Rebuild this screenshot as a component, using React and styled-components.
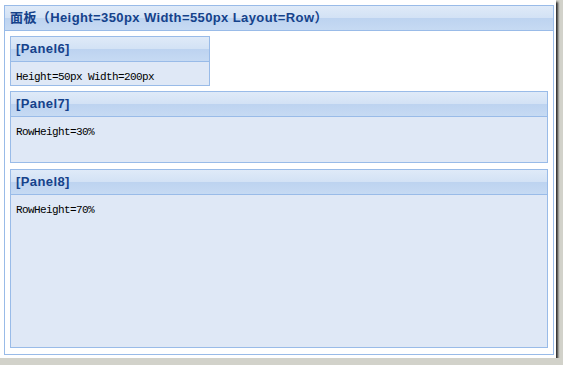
import styled, { createGlobalStyle } from "styled-components";

const GlobalStyle = createGlobalStyle`
    html, body {
        margin: 0;
        padding: 0;
        background: #d2d2ca;
    }
`;

const Frame = styled.div`
    width: 556px;
    height: 358px;
    box-sizing: border-box;
    padding: 5px 0 0 4px;
    background: #fff;
    box-shadow: 2px 2px 2px #2e2e2e;
`;

const Panel = styled.div`
    box-sizing: border-box;
    display: flex;
    flex-direction: column;
    border: 1px solid #99bbe8;
    width: ${(p) => p.$width || "auto"};
    height: ${(p) => p.$height || "auto"};
    flex: ${(p) => p.$flex || "none"};
    margin-bottom: ${(p) => p.$mb || "0"};
    background: ${(p) => p.$bg || "#dfe8f6"};
`;

const Header = styled.div`
    flex: none;
    height: 24px;
    line-height: 24px;
    padding-left: 5px;
    border-bottom: 1px solid #99bbe8;
    background: linear-gradient(
        to bottom,
        #dfeaf8 0%,
        #d3e2f5 48%,
        #bdd3f0 52%,
        #c6daf3 100%
    );
    color: #15428b;
    font-family: "Liberation Sans", "Noto Sans CJK SC", sans-serif;
    font-weight: bold;
    font-size: 13px;
    letter-spacing: 0.4px;
    white-space: nowrap;
    overflow: hidden;
`;

const Body = styled.div`
    flex: 1;
    min-height: 0;
    display: flex;
    flex-direction: column;
    padding: ${(p) => p.$padding || "8px 5px 0"};
    font-family: "Liberation Mono", monospace;
    font-size: 11px;
    letter-spacing: -0.6px;
    line-height: 14px;
    color: #000;
`;

const Text = styled.div`
    white-space: nowrap;
`;

export default function App() {
    return (
        <>
            <GlobalStyle />
            <Frame>
                <Panel $width="550px" $height="350px" $bg="#fff">
                    <Header>面板（Height=350px Width=550px Layout=Row）</Header>
                    <Body $padding="5px 5px 6px">
                        <Panel $width="200px" $height="50px" $mb="5px">
                            <Header>[Panel6]</Header>
                            <Body>
                                <Text>Height=50px Width=200px</Text>
                            </Body>
                        </Panel>
                        <Panel $height="72px" $mb="6px">
                            <Header>[Panel7]</Header>
                            <Body>
                                <Text>RowHeight=30%</Text>
                            </Body>
                        </Panel>
                        <Panel $flex="1">
                            <Header>[Panel8]</Header>
                            <Body>
                                <Text>RowHeight=70%</Text>
                            </Body>
                        </Panel>
                    </Body>
                </Panel>
            </Frame>
        </>
    );
}
